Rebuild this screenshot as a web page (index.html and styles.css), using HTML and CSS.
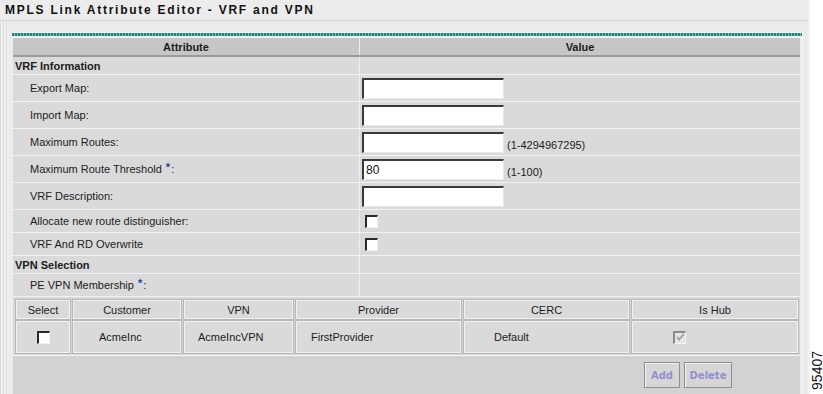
FILE: index.html
```html
<!DOCTYPE html>
<html lang="en">
<head>
<meta charset="UTF-8" />
<title>MPLS Link Attribute Editor - VRF and VPN</title>
<link rel="stylesheet" href="styles.css">
</head>
<body>

<div class="screen">
  <div class="main">
    <h1 class="title">MPLS Link Attribute Editor - VRF and VPN</h1>
    <div class="content">
      <div class="stripe"></div>
      <div class="panel">
        <div class="rule"></div>

        <div class="attrs">
          <div class="row head">
            <div class="name">Attribute</div>
            <div class="value">Value</div>
          </div>
          <div class="row section">
            <div class="name">VRF Information</div>
            <div class="value"></div>
          </div>
          <div class="row field">
            <div class="name">Export Map:</div>
            <div class="value"><input class="text" type="text"></div>
          </div>
          <div class="row field">
            <div class="name">Import Map:</div>
            <div class="value"><input class="text" type="text"></div>
          </div>
          <div class="row field">
            <div class="name">Maximum Routes:</div>
            <div class="value"><input class="text" type="text"><span class="hint">(1-4294967295)</span></div>
          </div>
          <div class="row field">
            <div class="name">Maximum Route Threshold<sup class="req">*</sup>:</div>
            <div class="value"><input class="text" type="text" value="80"><span class="hint">(1-100)</span></div>
          </div>
          <div class="row field">
            <div class="name">VRF Description:</div>
            <div class="value"><input class="text" type="text"></div>
          </div>
          <div class="row check">
            <div class="name">Allocate new route distinguisher:</div>
            <div class="value"><span class="box"></span></div>
          </div>
          <div class="row check">
            <div class="name">VRF And RD Overwrite</div>
            <div class="value"><span class="box"></span></div>
          </div>
          <div class="row section">
            <div class="name">VPN Selection</div>
            <div class="value"></div>
          </div>
          <div class="row check">
            <div class="name">PE VPN Membership<sup class="req">*</sup>:</div>
            <div class="value"></div>
          </div>
        </div>

        <div class="vpn">
          <div class="vpn-grid">
            <div class="vc th">Select</div>
            <div class="vc th">Customer</div>
            <div class="vc th">VPN</div>
            <div class="vc th">Provider</div>
            <div class="vc th">CERC</div>
            <div class="vc th">Is Hub</div>

            <div class="vc center"><span class="box"></span></div>
            <div class="vc pad-customer">AcmeInc</div>
            <div class="vc pad-vpn">AcmeIncVPN</div>
            <div class="vc pad-provider">FirstProvider</div>
            <div class="vc pad-cerc">Default</div>
            <div class="vc pad-hub">
              <span class="box checked">
                <svg width="9" height="9" viewBox="0 0 9 9"><path d="M1 4 L3 6.5 L8 1" fill="none" stroke="#9a9a9a" stroke-width="1.6"/></svg>
              </span>
            </div>
          </div>
        </div>

        <div class="actions">
          <button class="btn add" type="button">Add</button>
          <button class="btn delete" type="button">Delete</button>
        </div>
      </div>
    </div>
  </div>
  <div class="side"><span class="fig">95407</span></div>
</div>

</body>
</html>
```

FILE: styles.css
```css
/* Base */
* {
  box-sizing: border-box;
}

body {
  margin: 0;
  background: #fff;
  font-family: "Liberation Sans", Arial, sans-serif;
  font-size: 11px;
  color: #1c1c1c;
}

.screen {
  display: flex;
  height: 394px;
  overflow: hidden;
}

.main {
  width: 808px;
  background: #ececec;
  display: flex;
  flex-direction: column;
}

/* Page title */
.title {
  margin: 0;
  height: 22px;
  line-height: 20px;
  padding-left: 5px;
  font-size: 12px;
  font-weight: 700;
  letter-spacing: 1.75px;
  color: #111;
  border-bottom: 1px solid #d2d2d2;
}

.content {
  display: flex;
  flex: 1;
}

.stripe {
  width: 9px;
  background: repeating-linear-gradient(90deg, #dcdcdc 0 1px, #efefef 1px 3px);
}

.panel {
  margin: 11px 0 0 3px;
  width: 791px;
  border-right: 1px solid #f6f6f6;
}

/* teal dotted bar above the table */
.rule {
  height: 6px;
  border-top: 1px solid #f4f4f4;
  border-bottom: 2px solid #f4f4f4;
  background: repeating-linear-gradient(90deg, #1f857c 0 2px, #78bcb5 2px 3px);
}

/* Attribute / value grid */
.attrs {
  margin: 0 2px 0 1px;
}

.row {
  display: grid;
  grid-template-columns: 347px 1fr;
  background: #dadada;
  border-bottom: 1px solid #f2f2f2;
}

.name {
  display: flex;
  align-items: center;
  padding-left: 17px;
  border-right: 1px solid #eeeeee;
}

.value {
  display: flex;
  align-items: center;
  padding-left: 2px;
}

.row.head {
  height: 19px;
  background: #c6c6c6;
  border-bottom: 2px solid #9a9a9a;
  font-weight: 700;
}

.row.head .name,
.row.head .value {
  justify-content: center;
  padding-left: 0;
}

.row.section {
  height: 18px;
  font-weight: 700;
}

.row.section .name {
  padding-left: 2px;
}

.row.field {
  height: 27px;
}

.row.check {
  height: 23px;
}

.req {
  color: #1d3ca8;
  font-size: 11px;
  font-weight: 700;
  margin: 0 1px 0 4px;
  line-height: 0;
  position: relative;
  top: -2px;
}

input.text {
  width: 142px;
  height: 21px;
  margin: 0;
  padding: 0 2px;
  border-style: solid;
  border-width: 2px 1px 1px 2px;
  border-color: #3a3a3a #e8e8e8 #e8e8e8 #3a3a3a;
  background: #fff;
  font-family: "Liberation Sans", Arial, sans-serif;
  font-size: 12px;
  color: #111;
}

.hint {
  margin: 6px 0 0 3px;
}

.box {
  display: inline-flex;
  align-items: center;
  justify-content: center;
  width: 13px;
  height: 13px;
  margin-left: 3px;
  background: #fff;
  border-style: solid;
  border-width: 2px 1px 1px 2px;
  border-color: #2a2a2a #f0f0f0 #f0f0f0 #2a2a2a;
}

.box.checked {
  background: #e4e4e4;
  border-color: #8a8a8a #f4f4f4 #f4f4f4 #8a8a8a;
}

/* VPN membership table */
.vpn {
  margin: 0 2px 0 1px;
  padding: 3px 3px 2px 3px;
  background: #d8d8d8;
  border-bottom: 1px solid #f6f6f6;
}

.vpn-grid {
  display: grid;
  grid-template-columns: 54px 108px 109px 165px 165px 166px;
  grid-template-rows: 19px 32px;
  gap: 2px 3px;
}

.vc {
  display: flex;
  align-items: center;
  background: #dadada;
  border: 1px solid #f2f2f2;
  box-shadow: 0 0 0 1px #b6b6b6;
}

.vc.th,
.vc.center {
  justify-content: center;
}

.vc .box {
  margin-left: 0;
}

.pad-customer { padding-left: 25px; }
.pad-vpn { padding-left: 13px; }
.pad-provider { padding-left: 14px; }
.pad-cerc { padding-left: 29px; }
.pad-hub { padding-left: 40px; }

/* Button bar */
.actions {
  margin: 0 2px 0 1px;
  height: 40px;
  background: #d2d2d2;
  display: flex;
  justify-content: flex-end;
  align-items: flex-start;
  gap: 4px;
  padding: 6px 68px 0 0;
}

.btn {
  height: 26px;
  padding: 0;
  border: 1px solid #8e8e8e;
  background: #d6d6d6;
  box-shadow: inset 1px 1px 0 #f2f2f2;
  color: #8f8fd2;
  font-family: "DejaVu Sans", Verdana, sans-serif;
  font-size: 10px;
  font-weight: 700;
}

.btn.add { width: 36px; }
.btn.delete { width: 48px; }

/* Figure number on the right */
.side {
  width: 15px;
  border-left: 2px solid #f2f2f2;
  display: flex;
  flex-direction: column;
  justify-content: flex-end;
  align-items: center;
  padding-bottom: 4px;
}

.fig {
  writing-mode: vertical-rl;
  transform: rotate(180deg);
  font-size: 14px;
  color: #111;
}
```
